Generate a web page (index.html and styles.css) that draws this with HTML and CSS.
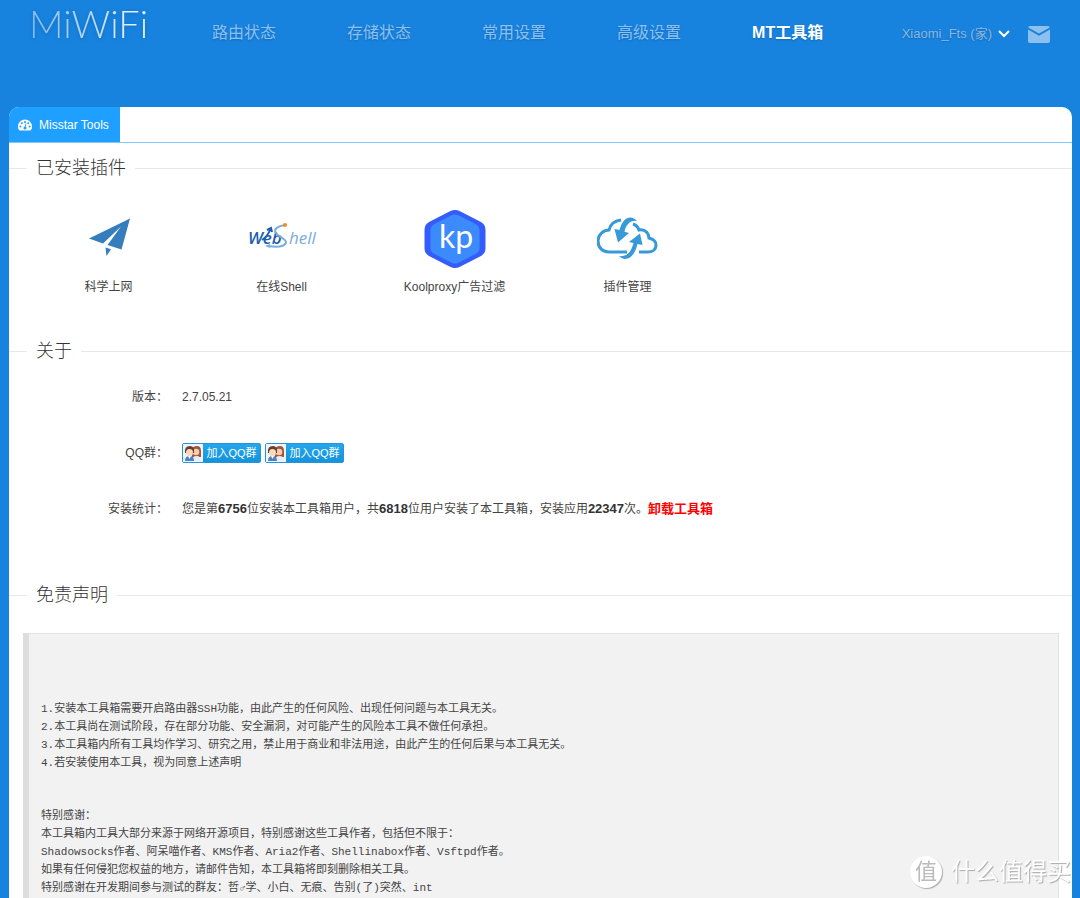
FILE: index.html
```html
<!DOCTYPE html>
<html lang="zh-CN">
<head>
<meta charset="utf-8">
<meta name="viewport" content="width=device-width, initial-scale=1">
<title>MiWiFi</title>
<link rel="stylesheet" href="styles.css">
</head>
<body>
<header class="header">
  <a class="logo" href="#">MiWiFi</a>
  <nav class="nav">
    <a href="#">路由状态</a>
    <a href="#">存储状态</a>
    <a href="#">常用设置</a>
    <a href="#">高级设置</a>
    <a class="active" href="#">MT工具箱</a>
  </nav>
  <div class="account">
    <button class="router" type="button">Xiaomi_Fts (家)
      <svg width="12" height="8" viewBox="0 0 12 8" aria-hidden="true"><path d="M1 1l5 5 5-5" fill="none" stroke="#fff" stroke-width="2"/></svg>
    </button>
    <button class="mail" type="button" aria-label="消息">
      <svg width="22" height="17" viewBox="0 0 22 17" aria-hidden="true"><path d="M2 0h18q1.600 0 1.800 1.500L11 7.500.2 1.500Q.4 0 2 0zM0 3.500l11 6.200 11-6.200V15q0 2-2 2H2q-2 0-2-2z" fill="#8cc1ef"/></svg>
    </button>
  </div>
</header>

<main class="panel">
  <div class="tabs">
    <a class="tab" href="#">
      <svg width="14" height="12" viewBox="0 0 14 12" aria-hidden="true"><path d="M7 .5a7 7 0 0 0-7 7q0 2 1 3.600.2.400.7.400h10.600q.5 0 .7-.4Q14 9.500 14 7.500a7 7 0 0 0-7-7z" fill="#fff"/><g fill="#1f9fff"><circle cx="2.400" cy="7.600" r="1"/><circle cx="3.800" cy="4.300" r="1"/><circle cx="7" cy="2.900" r="1"/><circle cx="10.200" cy="4.300" r="1"/><circle cx="11.600" cy="7.600" r="1"/><circle cx="7" cy="9" r="1.500"/><path d="M6.600 8.500l.9-4 .8.200-.8 4z"/></g></svg>
      Misstar Tools
    </a>
  </div>

  <h2 class="heading first">已安装插件</h2>
  <ul class="apps">
    <li><a href="#">
      <svg width="60" height="60" viewBox="0 0 60 60" aria-hidden="true"><g fill="#367dbd"><path d="M51 9.500L10 29.500l14 5L42 17.500 28.500 36 42.500 40.500z"/><path d="M26.500 38.500l5.500 1.800-4.500 6.700z"/></g></svg>
      <span>科学上网</span></a></li>
    <li><a href="#">
      <svg width="72" height="60" viewBox="0 0 72 60" role="img" aria-label="WebShell"><g class="web-text"><text x="2" y="35" class="web">Web</text><text x="43" y="35" class="shell">hell</text></g><path d="M16 31c5-3 7-7 9-12m-4 2l4-2 1 4" fill="none" stroke="#1c5fae" stroke-width="2"/><path d="M39 16c-7 1-12 4-9 8s11 6 10 10c-2 4-11 4-18 3" fill="none" stroke="#7aaedb" stroke-width="2"/><path d="M19 37l5-2v4z" fill="#7aaedb"/><circle cx="39" cy="16" r="2" fill="#f58a1f"/></svg>
      <span>在线Shell</span></a></li>
    <li><a href="#">
      <svg width="62" height="60" viewBox="0 0 62 60" role="img" aria-label="kp"><path d="M26 2.300q5-2.600 10 0l20.500 10.500q5 2.600 5 8v18.400q0 5.400-5 8L36 57.700q-5 2.600-10 0L5.500 47.200q-5-2.600-5-8V20.800q0-5.400 5-8z" fill="#345cfa"/><path d="M27.500 6.300q3.500-1.700 7 0l17 8.700q4 2 4 6v18q0 4-4 6l-17 8.700q-3.500 1.700-7 0l-17-8.700q-4-2-4-6V21q0-4 4-6z" fill="#3b8bfd"/><text x="32" y="39" text-anchor="middle" class="kp">kp</text></svg>
      <span>Koolproxy广告过滤</span></a></li>
    <li><a href="#">
      <svg width="62" height="60" viewBox="2 0 62 60" aria-hidden="true"><path d="M25 11c-7 1-11 5-12 10-6 0-11 5-11 11 0 7 5 11 11 11h18M37 15c3 1 5 3 6 6 7-1 10 4 10 8 4 1 7 3 7 7 0 5-4 7-8 7h-9" fill="none" stroke="#3799d8" stroke-width="3" transform="translate(1 0)"/><path d="M42 12C37 6 28 7 24.500 21L19.500 20 23 33.500 34 24l-4.500-1.200C31 16 35 11 42 12zM24 47c6 6 15 3 18.500-12l5 1L45 24.500 34 33l4.500 1C36 44 31 48 24 47z" fill="#3799d8"/></svg>
      <span>插件管理</span></a></li>
  </ul>

  <h2 class="heading">关于</h2>
  <dl class="about">
    <dt>版本：</dt>
    <dd class="version">2.7.05.21</dd>
    <dt>QQ群：</dt>
    <dd class="groups">
      <a class="qq" href="#"><svg width="20" height="18" viewBox="0 0 20 18" aria-hidden="true"><path fill="#edf6fc" d="M0 0h20v18H0z"/><path d="M9 14V7q0-5 5-5 4 0 4 5v6z" fill="#a5533c"/><circle cx="13" cy="8" r="3.300" fill="#f4cfae"/><path d="M9 17q0-5 4.500-5t4.500 5z" fill="#e8ecf5"/><path d="M2 9q-1-7 5-7 5 0 4 7z" fill="#6b3e2c"/><circle cx="6.500" cy="8.500" r="3.500" fill="#f8d9b8"/><path d="M2 17q0-5 4.500-5t4.500 5z" fill="#4d83c4"/><path d="M5 12l1.500 3L8 12z" fill="#fff"/></svg><span>加入QQ群</span></a>
      <a class="qq" href="#"><svg width="20" height="18" viewBox="0 0 20 18" aria-hidden="true"><path fill="#edf6fc" d="M0 0h20v18H0z"/><path d="M9 14V7q0-5 5-5 4 0 4 5v6z" fill="#a5533c"/><circle cx="13" cy="8" r="3.300" fill="#f4cfae"/><path d="M9 17q0-5 4.500-5t4.500 5z" fill="#e8ecf5"/><path d="M2 9q-1-7 5-7 5 0 4 7z" fill="#6b3e2c"/><circle cx="6.500" cy="8.500" r="3.500" fill="#f8d9b8"/><path d="M2 17q0-5 4.500-5t4.500 5z" fill="#4d83c4"/><path d="M5 12l1.500 3L8 12z" fill="#fff"/></svg><span>加入QQ群</span></a>
    </dd>
    <dt>安装统计：</dt>
    <dd><p class="stats">您是第<strong>6756</strong>位安装本工具箱用户，共<strong>6818</strong>位用户安装了本工具箱，安装应用<strong>22347</strong>次。<a href="#">卸载工具箱</a></p></dd>
  </dl>

  <h2 class="heading">免责声明</h2>
  <div class="notice">
    <p>1.安装本工具箱需要开启路由器SSH功能，由此产生的任何风险、出现任何问题与本工具无关。<br>
    2.本工具尚在测试阶段，存在部分功能、安全漏洞，对可能产生的风险本工具不做任何承担。<br>
    3.本工具箱内所有工具均作学习、研究之用，禁止用于商业和非法用途，由此产生的任何后果与本工具无关。<br>
    4.若安装使用本工具，视为同意上述声明</p>
    <p>特别感谢：<br>
    本工具箱内工具大部分来源于网络开源项目，特别感谢这些工具作者，包括但不限于：<br>
    Shadowsocks作者、阿呆喵作者、KMS作者、Aria2作者、Shellinabox作者、Vsftpd作者。<br>
    如果有任何侵犯您权益的地方，请邮件告知，本工具箱将即刻删除相关工具。<br>
    特别感谢在开发期间参与测试的群友：哲♂学、小白、无痕、告别(了)突然、int</p>
  </div>
</main>

<div class="watermark"><span class="seal">值</span><span>什么值得买</span></div>
</body>
</html>
```

FILE: styles.css
```css
* { box-sizing: border-box; }
body {
  margin: 0;
  min-height: 100vh;
  display: flex;
  flex-direction: column;
  background: #1883de;
  color: #444;
  font: 12px/18px "Liberation Sans", "Noto Sans CJK SC", sans-serif;
}
a { color: inherit; text-decoration: none; }
button { padding: 0; border: 0; background: none; font: inherit; cursor: pointer; }
svg { display: block; flex: none; }

.header {
  display: flex;
  align-items: flex-start;
  height: 107px;
  padding: 0 30px 0 29px;
}
.logo {
  flex: none;
  width: 183px;
  font: 300 38px/46px Lato, sans-serif;
  color: transparent;
  background: linear-gradient(90deg, #7db9ee, #e8f4ff 110px);
  background-clip: text;
  -webkit-background-clip: text;
  filter: drop-shadow(0 1px 2px rgba(0, 50, 110, .3));
}
.nav {
  display: flex;
  gap: 71px;
  padding-top: 21px;
  font-size: 16px;
  line-height: 24px;
  white-space: nowrap;
  color: #8cc1ef;
  text-shadow: 0 1px 2px rgba(0, 50, 110, .3);
}
.nav .active { color: #fff; font-weight: 700; }
.account {
  display: flex;
  align-items: center;
  gap: 18px;
  margin-left: auto;
  padding-top: 24px;
}
.router {
  display: flex;
  align-items: center;
  gap: 6px;
  color: #8cb6de;
  font-size: 13px;
  line-height: 20px;
  white-space: nowrap;
  text-shadow: 0 1px 2px rgba(0, 50, 110, .3);
}

.panel {
  flex: 1;
  display: flex;
  flex-direction: column;
  margin: 0 8px 0 9px;
  overflow: hidden;
  background: #fff;
  border-radius: 10px 10px 0 0;
}
.tabs { display: flex; border-bottom: 1px solid #85c6fb; }
.tab {
  display: flex;
  align-items: center;
  gap: 7px;
  height: 35px;
  padding: 0 11px 0 9px;
  background: #1f9fff;
  color: #fff;
  font-size: 12px;
}

.heading {
  display: flex;
  align-items: center;
  gap: 9px;
  margin: 43px 0 0;
  color: #333;
  font-size: 18px;
  font-weight: 300;
  line-height: 24px;
}
.heading::before, .heading::after { content: ""; height: 1px; background: #e8e8e8; }
.heading::before { width: 18px; }
.heading::after { flex: 1; }
.heading.first { margin-top: 13px; }

.apps {
  display: flex;
  flex-wrap: wrap;
  margin: 0;
  padding: 29px 13px 0;
  list-style: none;
}
.apps li { width: 173px; }
.apps a {
  display: flex;
  flex-direction: column;
  align-items: center;
  gap: 9px;
}
.web-text { font-family: "Open Sans", sans-serif; font-style: italic; }
.web { font-size: 17px; font-weight: 600; fill: #1c5fae; }
.shell { font-size: 17px; fill: #7aaedb; }
.kp { font: 32px Lato, sans-serif; fill: #fff; }

.about {
  display: grid;
  grid-template-columns: 159px 1fr;
  grid-auto-rows: 56px;
  align-items: center;
  column-gap: 14px;
  margin: 6px 0 3px;
}
.about dt { text-align: right; }
.about dd { margin: 0; }
.stats { margin: 0; }
.stats strong { font-size: 13px; color: #333; }
.stats a { font-size: 13px; font-weight: 700; color: #f00; }
.groups { display: flex; gap: 4px; }
.qq {
  display: flex;
  align-items: center;
  height: 20px;
  width: 79px;
  border: 1px solid #2a93d6;
  border-radius: 2px;
  background: linear-gradient(#23a7ec, #1592dc);
  color: #fff;
  font-size: 11px;
}
.qq span { flex: 1; text-align: center; white-space: nowrap; }

.notice {
  flex: 1;
  margin: 26px 13px 0 14px;
  padding: 66px 12px 0;
  border: 1px solid #e2e2e2;
  border-left: 6px solid #ddd;
  border-bottom: 0;
  background: #f2f2f2;
  font: 11px/18px "Liberation Mono", "Noto Sans CJK SC", monospace;
}
.notice p { margin: 0 0 35px; }
.notice p:last-child { margin: 0; }

.watermark {
  position: fixed;
  right: 9px;
  bottom: 9px;
  display: flex;
  align-items: center;
  gap: 9px;
  color: #fff;
  font-size: 24px;
  line-height: 34px;
  text-shadow: 1px 1px 1px #aaa;
}
.seal {
  width: 32px;
  height: 32px;
  border-radius: 50%;
  background: #fff;
  box-shadow: 1px 1px 1px #aaa;
  color: #bbb;
  font-size: 22px;
  line-height: 31px;
  text-align: center;
  text-shadow: none;
}
```
